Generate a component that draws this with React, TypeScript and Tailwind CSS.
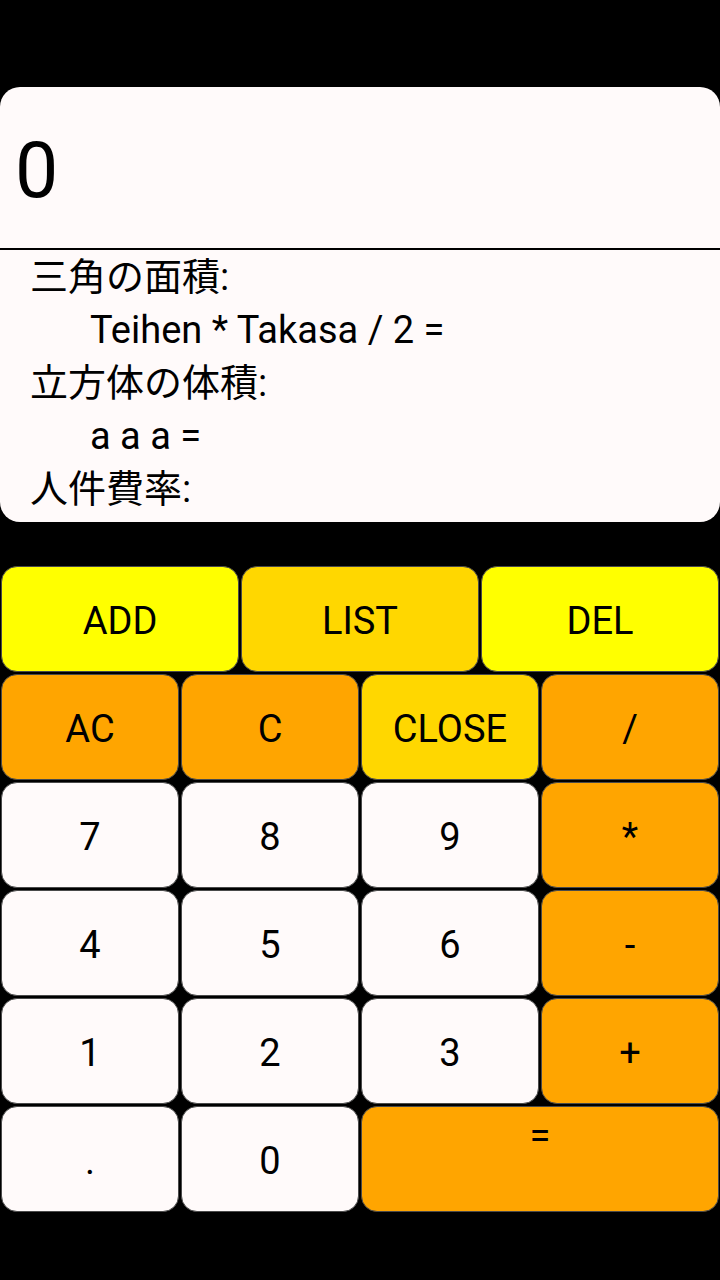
import React from 'react'

type Key = {
  label: string
  color: string
  span?: boolean
  top?: boolean
}

const FONT = "font-['Roboto','Noto_Sans_CJK_JP',sans-serif]"

const topRow: Key[] = [
  { label: 'ADD', color: 'bg-[#ffff00]' },
  { label: 'LIST', color: 'bg-[#ffd700]' },
  { label: 'DEL', color: 'bg-[#ffff00]' },
]

const keys: Key[] = [
  { label: 'AC', color: 'bg-[#ffa500]' },
  { label: 'C', color: 'bg-[#ffa500]' },
  { label: 'CLOSE', color: 'bg-[#ffd700]' },
  { label: '/', color: 'bg-[#ffa500]' },
  { label: '7', color: 'bg-[#fffafa]' },
  { label: '8', color: 'bg-[#fffafa]' },
  { label: '9', color: 'bg-[#fffafa]' },
  { label: '*', color: 'bg-[#ffa500]' },
  { label: '4', color: 'bg-[#fffafa]' },
  { label: '5', color: 'bg-[#fffafa]' },
  { label: '6', color: 'bg-[#fffafa]' },
  { label: '-', color: 'bg-[#ffa500]' },
  { label: '1', color: 'bg-[#fffafa]' },
  { label: '2', color: 'bg-[#fffafa]' },
  { label: '3', color: 'bg-[#fffafa]' },
  { label: '+', color: 'bg-[#ffa500]' },
  { label: '.', color: 'bg-[#fffafa]' },
  { label: '0', color: 'bg-[#fffafa]' },
  { label: '=', color: 'bg-[#ffa500]', span: true, top: true },
]

const formulas = [
  { text: '三角の面積:', indent: false },
  { text: 'Teihen * Takasa / 2 =', indent: true },
  { text: '立方体の体積:', indent: false },
  { text: 'a a a =', indent: true },
  { text: '人件費率:', indent: false },
]

function CalcButton({ k }: { k: Key }) {
  return (
    <div className={`p-px h-[108px] ${k.span ? 'col-span-2' : ''}`}>
      <button
        className={`w-full h-full rounded-[16px] border border-[#4a4a4a] ${k.color} text-black text-[38px] leading-[44px] flex justify-center ${
          k.top ? 'items-start pt-[7px]' : 'items-center pt-[4px]'
        }`}
      >
        {k.label}
      </button>
    </div>
  )
}

export default function App() {
  return (
    <div className={`w-[720px] h-[1280px] bg-black pt-[87px] ${FONT}`}>
      {/* 表示部 */}
      <div className="bg-[#fffafa] rounded-[20px] h-[435px] overflow-hidden flex flex-col">
        <div className="h-[161px] flex items-center pl-[15px] pt-[8px] text-[77px] text-black">
          0
        </div>
        <div className="h-[2px] bg-black" />
        <div className="pl-[30px] pt-[1px] text-[38px] leading-[53px] text-black">
          {formulas.map((f, i) => (
            <div key={i} className={f.indent ? 'pl-[60px]' : ''}>
              {f.text}
            </div>
          ))}
        </div>
      </div>

      {/* ボタン */}
      <div className="mt-[42px] pt-px">
        <div className="grid grid-cols-3">
          {topRow.map((k) => (
            <CalcButton key={k.label} k={k} />
          ))}
        </div>
        <div className="grid grid-cols-4">
          {keys.map((k) => (
            <CalcButton key={k.label} k={k} />
          ))}
        </div>
      </div>
    </div>
  )
}
